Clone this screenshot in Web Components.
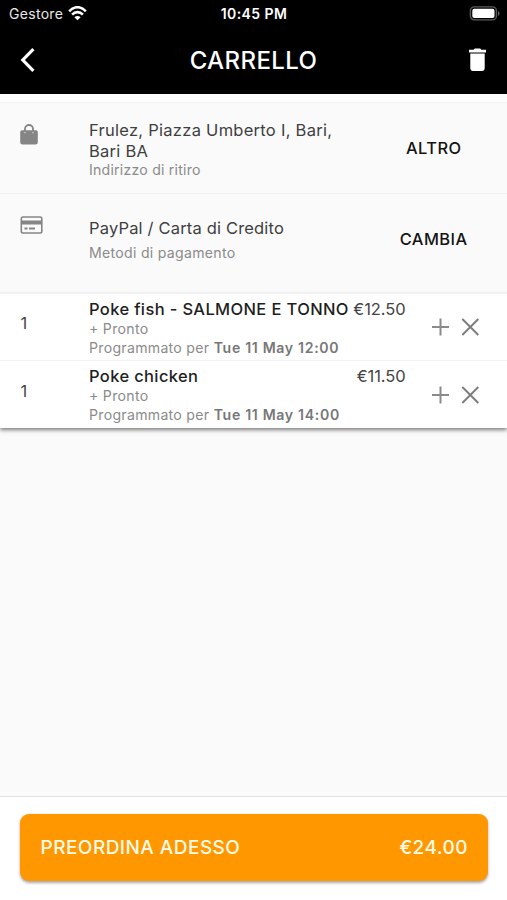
<!DOCTYPE html>
<html lang="it"><head><meta charset="utf-8"><title>Carrello</title>
<style>
body{margin:0;background:#fafafa;font-family:Inter,"Liberation Sans",sans-serif}
</style></head><body>
<cart-page></cart-page>
<script>
const define=(name,html)=>customElements.define(name,class extends HTMLElement{
  constructor(){super();this.attachShadow({mode:'open'}).innerHTML=html;}
});

define('status-bar',`<style>
:host{display:grid;grid-template-columns:1fr auto 1fr;align-items:center;height:27px;padding:0 7px 0 9px;color:#fff;font-size:14px;line-height:20px}
.left{display:flex;align-items:center;gap:5px;letter-spacing:.3px;color:#e8e8e8}
.time{font-weight:600;font-size:14px;letter-spacing:.42px;margin-right:1px}
.bat{justify-self:end}
svg{display:block}
</style>
<div class="left"><span>Gestore</span><svg width="19" height="15" viewBox="0 0 19 15" fill="none" stroke="#fff" stroke-width="2.6"><path d="M1.200 5.300C6-.2 13-.2 17.800 5.300M4.100 8.700c3.100-3.400 7.700-3.400 10.800 0"/><path d="M9.500 14.200 6.400 11.200c1.900-1.700 4.300-1.700 6.200 0z" fill="#fff" stroke="none"/></svg></div>
<span class="time">10:45 PM</span>
<svg class="bat" width="31" height="15" viewBox="0 0 31 15"><rect x="1.400" y=".9" width="26" height="13" rx="4" fill="none" stroke="#5c5c5c" stroke-width="1.4"/><rect x="3.300" y="2.800" width="22.200" height="9.200" rx="2" fill="#fff"/><path d="M29 5c2 1 2 4 0 5z" fill="#666"/></svg>`);

define('app-bar',`<style>
:host{display:grid;grid-template-columns:1fr auto 1fr;align-items:center;height:66.5px;padding:0 20px;box-sizing:border-box;color:#fff}
.title{font-size:24px;font-weight:500;line-height:30px;letter-spacing:.4px;padding-top:1px}
svg{display:block}.r{justify-self:end}
</style>
<svg width="16" height="26" viewBox="0 0 16 26"><path d="M13.400 2.200 2.800 13l10.600 10.800" fill="none" stroke="#fff" stroke-width="3.2"/></svg>
<span class="title">CARRELLO</span>
<svg class="r" width="19" height="24" viewBox="0 0 19 24"><path d="M1 1.800h4.600L6.800.6h5.400l1.200 1.200H18v2.600H1zM2.300 5.500h14.400v15a2.400 2.400 0 0 1-2.400 2.400H4.700a2.400 2.400 0 0 1-2.400-2.400z" fill="#fff"/></svg>`);

define('detail-row',`<style>
:host{display:grid;grid-template-columns:69px 1fr auto;box-sizing:border-box;padding:0 20px;border-bottom:1px solid #f0f0f0;background:#fafafa}
.body{display:flex;flex-direction:column;align-items:flex-start;gap:var(--gap,0)}
::slotted([slot=title]){font-size:16.5px;line-height:20.5px;color:#3f3f3f;letter-spacing:var(--ts)}
::slotted([slot=sub]){font-size:14.1px;line-height:18px;color:#8b8b8b;letter-spacing:var(--ss)}
::slotted([slot=action]){font-size:16.4px;font-weight:500;line-height:20px;color:#141414;letter-spacing:.45px}
::slotted(svg){display:block}
</style><slot name="icon"></slot><div class="body"><slot name="title"></slot><slot name="sub"></slot></div><slot name="action"></slot>`);

define('cart-item',`<style>
:host{display:grid;grid-template-columns:69px 1fr auto;box-sizing:border-box;height:67.3px;padding:4.7px 27px 0 20px;background:#fff;border-top:1px solid #f3f3f3}
.qty{padding:14.8px 0 0 .5px;font-size:16.5px;line-height:20px;color:#444}
.head{display:flex;justify-content:space-between;width:316.5px;font-size:16.5px;line-height:20px;white-space:nowrap}
.name{color:#1e1e1e;font-weight:500;letter-spacing:.36px}.price{color:#444;letter-spacing:-.1px}
.sub{font-size:14.1px;line-height:19.5px;color:#8b8b8b;letter-spacing:.29px}
.acts{display:flex;gap:11px;padding-top:18.8px;align-items:flex-start}
svg{display:block}
</style>
<div class="qty"><slot name="qty"></slot></div>
<div><div class="head"><span class="name"><slot name="name"></slot></span><span class="price"><slot name="price"></slot></span></div>
<div class="sub"><slot name="extra"></slot></div><div class="sub"><slot name="when"></slot></div></div>
<div class="acts"><svg width="19" height="20" viewBox="0 0 19 20"><path d="M9.500 1.500v17M1 10h17" stroke="#8a8a8a" stroke-width="2"/></svg><svg width="19" height="20" viewBox="0 0 19 20"><path d="M1.300 2l16 16M17.300 2l-16 16" stroke="#7c7c7c" stroke-width="1.9"/></svg></div>`);

define('order-bar',`<style>
:host{display:block;box-sizing:border-box;height:104.5px;border-top:1.5px solid #e2e2e2;background:#fff;padding:17.5px 19px 0 20px}
button{display:flex;justify-content:space-between;align-items:center;box-sizing:border-box;width:100%;height:66.500px;padding:1px 20px 0 20.5px;border:0;border-radius:9px;background:#ff9800;box-shadow:0 1.5px 3px rgba(0,0,0,.35);color:#fffbe8;font:500 19px/24px Inter,"Liberation Sans",sans-serif;letter-spacing:.47px}
</style><button><slot name="label"></slot><slot name="total"></slot></button>`);

define('cart-page',`<style>
:host{display:flex;flex-direction:column;height:900px;width:507px;overflow:hidden;background:#fafafa}
header{background:#000}
.strip{flex:none;box-sizing:border-box;height:9.5px;border-bottom:1px solid #f4f4f4;background:#fdfdfd}
.pick{height:91px;padding-top:17px;padding-right:45.5px;--ts:.27px;--ss:.23px}
.pick [slot=action]{margin-top:18px}
.pay{height:99px;padding-top:24px;padding-right:39.5px;--ts:.17px;--ss:.29px;--gap:5.5px}
.pay [slot=action]{margin-top:10.5px}
.items{box-shadow:0 2px 4px rgba(0,0,0,.5);clip-path:inset(0 0 -10px 0)}
main{flex:1}
b{font-weight:600;color:#777;letter-spacing:.68px}
</style>
<header><status-bar></status-bar><app-bar></app-bar></header>
<div class="strip"></div>
<detail-row class="pick"><svg slot="icon" width="18" height="21" viewBox="0 0 18 21" style="margin-top:3.5px"><path d="M2 6.200h14a1.800 1.800 0 0 1 1.800 1.800v10.200a2.300 2.300 0 0 1-2.300 2.300h-13A2.300 2.300 0 0 1 .2 18.200V8A1.800 1.800 0 0 1 2 6.200z" fill="#858585"/><path d="M5 7.500V5a4 4 0 0 1 8 0v2.500" fill="none" stroke="#858585" stroke-width="1.8"/><circle cx="5" cy="8.600" r=".8" fill="#ccc"/><circle cx="13" cy="8.600" r=".8" fill="#ccc"/></svg>
<span slot="title">Frulez, Piazza Umberto I, Bari,<br>Bari BA</span><span slot="sub">Indirizzo di ritiro</span><span slot="action">ALTRO</span></detail-row>
<detail-row class="pay"><svg slot="icon" width="23" height="18" viewBox="0 0 23 18" style="margin-top:-2.5px"><rect x="1.300" y="1" width="20.500" height="16" rx="1.700" fill="none" stroke="#858585" stroke-width="1.6"/><path d="M1.300 4.500h20.500v4H1.300z" fill="#858585"/><path d="M4.500 12.500h3M9 12.500h6" stroke="#858585" stroke-width="2"/></svg>
<span slot="title">PayPal / Carta di Credito</span><span slot="sub">Metodi di pagamento</span><span slot="action">CAMBIA</span></detail-row>
<div class="items">
<cart-item><span slot="qty">1</span><span slot="name">Poke fish - SALMONE E TONNO</span><span slot="price">€12.50</span><span slot="extra">+ Pronto</span><span slot="when">Programmato per <b>Tue 11 May 12:00</b></span></cart-item>
<cart-item><span slot="qty">1</span><span slot="name">Poke chicken</span><span slot="price">€11.50</span><span slot="extra">+ Pronto</span><span slot="when">Programmato per <b>Tue 11 May 14:00</b></span></cart-item>
</div>
<main></main>
<order-bar><span slot="label">PREORDINA ADESSO</span><span slot="total">€24.00</span></order-bar>`);
</script></body></html>
